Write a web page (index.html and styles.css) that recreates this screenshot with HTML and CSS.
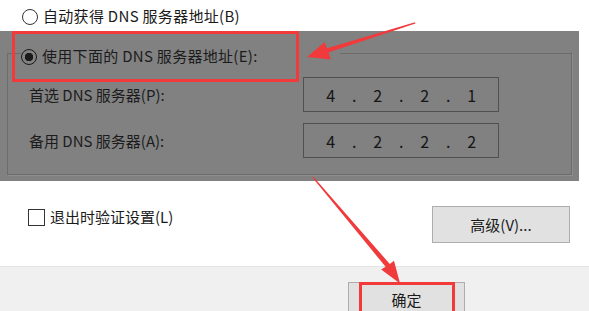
FILE: index.html
```html
<!DOCTYPE html>
<html lang="zh-CN">
<head>
    <meta charset="UTF-8">
    <title>DNS 设置</title>
    <link rel="stylesheet" href="styles.css">
</head>
<body>
    <div class="dialog">
        <div class="opt-auto"><span class="radio"></span>自动获得 DNS 服务器地址(B)</div>
        <div class="shade">
            <fieldset class="group">
                <legend><span class="radio on"></span>使用下面的 DNS 服务器地址(E):</legend>
                <div class="field">
                    <span class="label">首选 DNS 服务器(P):</span>
                    <div class="ip"><span>4</span><span>.</span><span>2</span><span>.</span><span>2</span><span>.</span><span>1</span></div>
                </div>
                <div class="field">
                    <span class="label">备用 DNS 服务器(A):</span>
                    <div class="ip"><span>4</span><span>.</span><span>2</span><span>.</span><span>2</span><span>.</span><span>2</span></div>
                </div>
            </fieldset>
        </div>
        <div class="extra">
            <div class="check"><span class="box"></span>退出时验证设置(L)</div>
            <div class="btn adv">高级(V)...</div>
        </div>
        <div class="footer">
            <div class="btn ok">确定</div>
        </div>
        <!-- 标注: 红框和箭头 -->
        <svg class="marks" width="589" height="311" viewBox="0 0 589 311">
            <rect x="13.5" y="32.5" width="284" height="48" fill="none" stroke="#f23a3a" stroke-width="3"/>
            <rect x="360.5" y="283.5" width="93" height="30" fill="none" stroke="#f23a3a" stroke-width="3"/>
            <polygon fill="#f03a3c" points="415,22.3 327,48.2 324.5,42.2 307,57 330.8,59.6 328.4,52.6 415.4,23.6"/>
            <polygon fill="#f03a3c" points="312.4,177.4 385.6,266.8 381.2,269.6 400,283.5 394,260.8 389.8,264 313.4,176.8"/>
        </svg>
    </div>
</body>
</html>
```

FILE: styles.css
```css
body{
    margin: 0;
    padding: 0;
}
.dialog{
    position: relative;
    width: 589px;
    height: 311px;
    overflow: hidden;
    background: #fff;
    font-family: "Noto Sans CJK SC", "Liberation Sans", sans-serif;
    font-size: 15px;
    color: #1a1a1a;
}
.radio{
    display: inline-block;
    box-sizing: border-box;
    width: 16px;
    height: 16px;
    margin-right: 5px;
    border: 1px solid #333;
    border-radius: 50%;
    background: #fff;
    vertical-align: -3px;
}
.radio.on{
    border-color: #1a1a1a;
    background: radial-gradient(circle, #1a1a1a 0 4px, transparent 4.5px);
}
.opt-auto{
    height: 31px;
    line-height: 31px;
    padding-left: 22px;
    letter-spacing: 0.3px;
}
.shade{
    width: 579px;
    height: 150px;
    box-sizing: border-box;
    padding: 9px 7px 0 7px;
    background: #818181;
    color: #1c1c1c;
}
.group{
    margin: 0;
    padding: 0 0 16px 21px;
    border: 1px solid #6c6c6c;
    box-shadow: 1px 1px 0 #8e8e8e;
    min-width: 0;
}
.group legend{
    margin-left: -8px;
    padding: 6px 82px 0 0;
    line-height: 20px;
    letter-spacing: 0.3px;
}
.field{
    display: flex;
    align-items: center;
    margin-top: 11px;
}
.label{
    width: 274px;
}
.ip{
    display: flex;
    box-sizing: border-box;
    width: 196px;
    height: 35px;
    padding-left: 15px;
    border: 1px solid #505050;
    align-items: center;
    font-size: 16px;
    color: #151515;
}
.ip span{
    width: 23.5px;
    text-align: center;
}
.extra{
    display: flex;
    justify-content: space-between;
    align-items: flex-start;
    box-sizing: border-box;
    height: 85px;
    padding: 25px 19px 0 28px;
}
.check{
    margin-top: 1px;
    line-height: 19px;
}
.check .box{
    display: inline-block;
    box-sizing: border-box;
    width: 17px;
    height: 17px;
    margin-right: 5px;
    border: 1px solid #333;
    vertical-align: -3px;
}
.btn{
    box-sizing: border-box;
    background: #e1e1e1;
    border: 1px solid #adadad;
    text-align: center;
    color: #1a1a1a;
}
.adv{
    width: 138px;
    height: 37px;
    line-height: 35px;
}
.footer{
    height: 45px;
    box-sizing: border-box;
    padding: 15px 0 0 348px;
    background: #f0f0f0;
    border-top: 1px solid #e4e4e4;
}
.ok{
    width: 117px;
    height: 36px;
    line-height: 34px;
}
.marks{
    position: absolute;
    top: 0;
    left: 0;
    pointer-events: none;
}
```
